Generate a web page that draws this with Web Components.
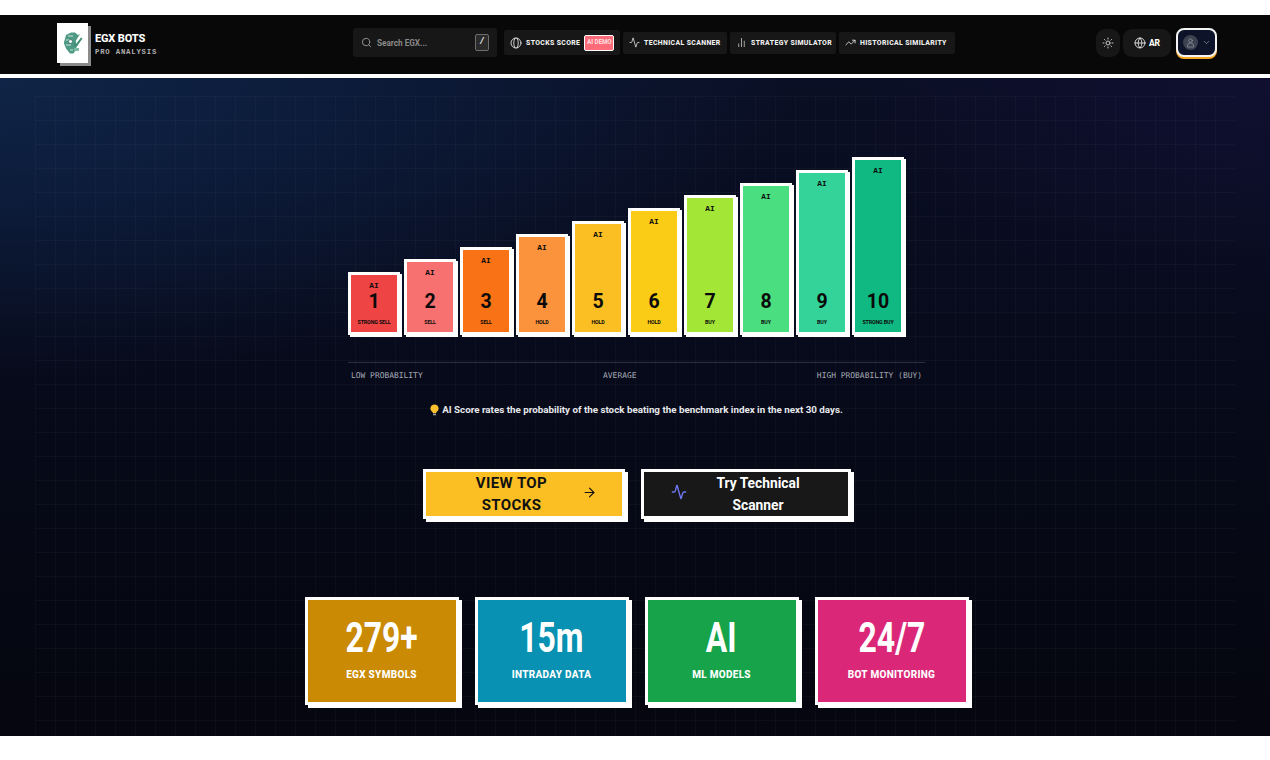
<!DOCTYPE html>
<html><head><meta charset="utf-8"><style>
html,body{margin:0;background:#fff;height:760px;overflow:hidden}
body{font-family:Roboto,"Liberation Sans",sans-serif}
</style></head><body>
<app-shell>
<top-nav></top-nav>
<main-view></main-view>
</app-shell>
<script>
const ic=(s,d,c='currentColor',w=2)=>`<svg width="${s}" height="${s}" viewBox="0 0 24 24" fill="none" stroke="${c}" stroke-width="${w}" stroke-linecap="round" stroke-linejoin="round">${d}</svg>`;
const P={
 search:'<circle cx="11" cy="11" r="8"/><path d="m21 21-4.300-4.300"/>',
 ball:'<circle cx="12" cy="12" r="10"/><path d="M10 2.200C6.500 8 6.500 16 10 21.800M14 2.200c3.500 5.800 3.500 13.800 0 19.600"/>',
 pulse:'<path d="M22 12h-2.500a2 2 0 0 0-1.900 1.500l-2.400 8.300a.25.25 0 0 1-.5 0L9.200 2.200a.25.25 0 0 0-.5 0L6.400 10.500A2 2 0 0 1 4.500 12H2"/>',
 bars:'<path d="M6 21v-6M12 21V3M18 21V9"/>',
 trend:'<path d="M16 7h6v6"/><path d="m22 7-8.500 8.500-5-5L2 17"/>',
 sun:'<circle cx="12" cy="12" r="4"/><path d="M12 2v2M12 20v2M4.900 4.900l1.400 1.400M17.700 17.700l1.400 1.400M2 12h2M20 12h2M6.300 17.700l-1.400 1.400M19.100 4.900l-1.400 1.400"/>',
 globe:'<circle cx="12" cy="12" r="10"/><path d="M2 12h20"/><path d="M12 2a14.500 14.500 0 0 0 0 20 14.500 14.500 0 0 0 0-20"/>',
 user:'<circle cx="12" cy="8" r="4"/><path d="M5 21v-1a7 7 0 0 1 14 0v1z"/>',
 chev:'<path d="m6 9 6 6 6-6"/>',
 arrow:'<path d="M5 12h14"/><path d="m12 5 7 7-7 7"/>'
};
class Base extends HTMLElement{
  constructor(){super();this.attachShadow({mode:'open'}).innerHTML=this.markup();}
}
customElements.define('app-shell',class extends Base{markup(){return `<style>
:host{display:flex;flex-direction:column;margin-top:15px;height:721px;overflow:hidden}
</style><slot></slot>`}});

customElements.define('nav-link',class extends Base{markup(){return `<style>
:host{display:flex;align-items:center;gap:4px;height:22px;padding:0 6px 0 6px;background:#171717;border-radius:2px;
font:800 6.900px Roboto,sans-serif;letter-spacing:.36px;color:#f1f1f1;white-space:nowrap;box-sizing:border-box;width:var(--w);flex:none}
:host([active]){height:25px;padding:0 6px 0 6px;gap:4px}
::slotted(svg){flex:none}
</style><slot></slot>`}});

customElements.define('top-nav',class extends Base{markup(){return `<style>
:host{display:flex;align-items:center;padding:0 0 4px 57px;background:#080808;border-bottom:4px solid #fff;box-sizing:content-box;flex:none;color:#fff;height:55px}
.logo{width:31px;height:40px;background:#fff;box-shadow:3px 3px 0 #8b8b8b;display:flex;align-items:center;justify-content:center;flex:none}
.brand{margin:4px 0 0 7px;width:258px;flex:none;display:flex;flex-direction:column;gap:2px}
.b1{font:800 11px/14px Roboto,sans-serif;letter-spacing:-.15px}
.b2{font:700 7.300px/9px "Liberation Mono",monospace;letter-spacing:.8px;color:#b0b0b0}
.search{width:144px;height:29px;background:#171717;border-radius:3px;display:flex;align-items:center;padding:0 8px 0 8px;box-sizing:border-box;color:#9a9a9a;flex:none}
.search span{font:700 8.200px Roboto,sans-serif;margin-left:5px;flex:1;color:#8a8a8a}
.kbd{width:14px;height:17px;border:1px solid #6d6d6d;background:#2a2a2a;border-radius:2px;box-sizing:border-box;color:#e6e6e6;font:700 9px/15px "Liberation Mono",monospace;text-align:center}
.links{display:flex;align-items:center;gap:3px;margin-left:7px;width:451px;flex:none}
.badge{background:#ff6b78;color:#ffd9dc;border:1.500px solid #fff;border-radius:2px;font:800 6.300px/13px Roboto,sans-serif;width:30px;height:16px;box-sizing:border-box;text-align:center;letter-spacing:-.1px;flex:none}
.right{display:flex;align-items:center;gap:3px;margin-left:141px}
.theme{width:24px;height:28px;background:#171717;border-radius:9px;display:flex;align-items:center;justify-content:center;color:#c8c8c8}
.lang{width:48px;height:28px;background:#171717;border-radius:9px;display:flex;align-items:center;justify-content:center;gap:3px;font:800 8.500px Roboto,sans-serif}
.user{width:41px;height:29px;margin-left:2px;box-sizing:border-box;border:2px solid #f4f4f4;border-radius:8px;background:#0d1328;box-shadow:0 2px 0 #f5a623;display:flex;align-items:center;gap:4px;padding-left:5px;color:#8a8f9c}
.av{width:15px;height:15px;border-radius:50%;background:#3d4250;display:flex;align-items:center;justify-content:center}
</style>
<div class="logo"><svg width="22" height="24" viewBox="0 0 22 24" aria-hidden="true">
<path d="M4 4 9 1.500h4l3 2.500 2-1-4 6.500.5 8.500-3 4.500H8l-4-5L1.800 12z" fill="#4f9a84"/>
<path d="M6 5h5M4 9h4M4 14h5M8 19h3" stroke="#c9e3da" stroke-width="1.100" fill="none"/>
<circle cx="8.500" cy="10.500" r="2" fill="#fff" stroke="#2f6f5e" stroke-width=".8"/>
<path d="m11 14 3.500 2 6-8.500-1.500-1L14 13l-2-1.200z" fill="#3e8f74"/>
<path d="M12 17h5v3h-5z" fill="#7dbba6"/></svg></div>
<div class="brand"><div class="b1">EGX BOTS</div><div class="b2">PRO ANALYSIS</div></div>
<div class="search">${ic(11,P.search,'#9a9a9a')}<span>Search EGX...</span><div class="kbd">/</div></div>
<div class="links">
<nav-link active style="--w:116px">${ic(12,P.ball,'#f1f1f1',1.700)}STOCKS SCORE<span class="badge">AI DEMO</span></nav-link>
<nav-link style="--w:104px">${ic(11,P.pulse,'#e8e8e8',1.700)}TECHNICAL SCANNER</nav-link>
<nav-link style="--w:106px">${ic(11,P.bars,'#c4c4c4',1.800)}STRATEGY SIMULATOR</nav-link>
<nav-link style="--w:116px">${ic(11,P.trend,'#e8e8e8',1.800)}HISTORICAL SIMILARITY</nav-link>
</div>
<div class="right">
<div class="theme">${ic(12,P.sun,'#c8c8c8',2)}</div>
<div class="lang">${ic(12,P.globe,'#f1f1f1',1.700)}AR</div>
<div class="user"><div class="av">${ic(11,P.user,'#8f94a0',1.600)}</div>${ic(9,P.chev,'#8a8f9c',2)}</div>
</div>`}});

customElements.define('score-bar',class extends Base{
markup(){const n=this.getAttribute('n'),h=this.getAttribute('h'),c=this.getAttribute('c'),l=this.getAttribute('l');
return `<style>
:host{display:flex;flex-direction:column;align-items:center;width:52px;height:${h}px;box-sizing:border-box;border:3px solid #fff;box-shadow:2px 2px 0 #fff;background:${c};color:#0a0a0a;flex:none;text-align:center}
.ai{font:700 7.800px/10px "Liberation Mono",monospace;margin-top:6px}
.sp{flex:1}
.n{font:700 19.500px/22px Roboto,sans-serif}
.l{font:700 5.300px/7px Roboto,sans-serif;margin:6px 0 6px;letter-spacing:-.12px;white-space:nowrap}
</style><div class="ai">AI</div><div class="sp"></div><div class="n">${n}</div><div class="l">${l}</div>`}});

customElements.define('cta-button',class extends Base{markup(){return `<style>
:host{display:flex;align-items:center;box-sizing:border-box;height:50px;border:3px solid #fff;box-shadow:3px 3px 0 #fff;flex:none}
:host([primary]){width:202px;background:#fbbf24;color:#111;padding:0 25px 0 43px;justify-content:space-between}
:host(:not([primary])){width:210px;background:#181818;color:#fff;padding:0 40px 0 27px;justify-content:space-between}
.t{font:700 15px/22.500px Roboto,sans-serif;text-align:center}
:host([primary]) .t{letter-spacing:.4px;width:85px}
:host(:not([primary])) .t{width:100px;font-size:13.800px}
</style><slot name="a"></slot><div class="t"><slot></slot></div><slot name="b"></slot>`}});

customElements.define('stat-card',class extends Base{markup(){const c=this.getAttribute('c');return `<style>
:host{display:flex;flex-direction:column;align-items:center;width:154px;height:108px;box-sizing:border-box;border:3px solid #fff;box-shadow:3px 3px 0 #fff;background:${c};color:#fff;flex:none;padding-top:16px}
.v{font:700 42px/44px Roboto,sans-serif;transform:scaleX(.76)}
.k{font:800 10px/14px Roboto,sans-serif;letter-spacing:.3px;margin-top:8px;white-space:nowrap}
</style><div class="v">${this.getAttribute('v')}</div><div class="k">${this.getAttribute('k')}</div>`}});

const bars=[[1,63,'#ef4444','STRONG SELL'],[2,76,'#f87171','SELL'],[3,88.500,'#f97316','SELL'],[4,101,'#fb923c','HOLD'],[5,114,'#fbbf24','HOLD'],[6,127,'#facc15','HOLD'],[7,140,'#a3e635','BUY'],[8,152.500,'#4ade80','BUY'],[9,165,'#34d399','BUY'],[10,178,'#10b981','STRONG BUY']];
customElements.define('main-view',class extends Base{markup(){return `<style>
:host{display:flex;flex-direction:column;align-items:center;flex:1;position:relative;padding:79px 0 0 3px;box-sizing:border-box;min-height:0;color:#fff;
background:radial-gradient(ellipse 800px 300px at 0 0,#0f2446 0,#0d1e3e 30%,rgba(8,14,36,0) 100%),radial-gradient(ellipse 420px 220px at 100% 0,#100f30 0,rgba(10,12,32,0) 100%),linear-gradient(180deg,#0a0f25 0,#070a1a 45%,#05060f 100%)}
:host::before{content:"";position:absolute;left:35px;right:35px;top:18px;bottom:0;pointer-events:none;
background-image:linear-gradient(rgba(255,255,255,.028) 1px,transparent 1px),linear-gradient(90deg,rgba(255,255,255,.022) 1px,transparent 1px);background-size:20px 24px}
.bars{display:flex;gap:4px;align-items:flex-end;width:577px;height:178px;position:relative}
.rule{width:577px;height:1px;background:rgba(255,255,255,.15);margin-top:27px;position:relative}
.scale{width:571px;display:flex;justify-content:space-between;font:400 7.950px/12px "DejaVu Sans Mono",monospace;color:#a3a9b4;margin-top:7px;position:relative}
.note{font:700 9.800px/14px Roboto,sans-serif;color:#e6e8ec;margin-top:21px;position:relative;display:flex;align-items:center;gap:3px}
.btns{display:flex;gap:16px;margin-top:52px;position:relative;margin-left:1px}
.stats{display:flex;gap:16px;margin-top:78px;position:relative}
</style>
<div class="bars">${bars.map(b=>`<score-bar n="${b[0]}" h="${b[1]}" c="${b[2]}" l="${b[3]}"></score-bar>`).join('')}</div>
<div class="rule"></div>
<div class="scale"><span>LOW PROBABILITY</span><span>AVERAGE</span><span>HIGH PROBABILITY (BUY)</span></div>
<div class="note"><svg width="9" height="12" viewBox="0 0 9 12"><path d="M4.500.5a4 4 0 0 0-2.300 7.300L3 9h3l.8-1.200A4 4 0 0 0 4.500.5z" fill="#fbc02d"/><path d="M3 9.500h3v1.800H3z" fill="#9a9a9a"/></svg>AI Score rates the probability of the stock beating the benchmark index in the next 30 days.</div>
<div class="btns">
<cta-button primary>VIEW TOP<br>STOCKS<span slot="b">${ic(15,P.arrow,'#111',1.800)}</span></cta-button>
<cta-button><span slot="a">${ic(16,P.pulse,'#6f76f2',2)}</span>Try Technical<br>Scanner</cta-button>
</div>
<div class="stats">
<stat-card c="#ca8a04" v="279+" k="EGX SYMBOLS"></stat-card>
<stat-card c="#0891b2" v="15m" k="INTRADAY DATA"></stat-card>
<stat-card c="#16a34a" v="AI" k="ML MODELS"></stat-card>
<stat-card c="#db2777" v="24/7" k="BOT MONITORING"></stat-card>
</div>`}});
</script></body></html>
